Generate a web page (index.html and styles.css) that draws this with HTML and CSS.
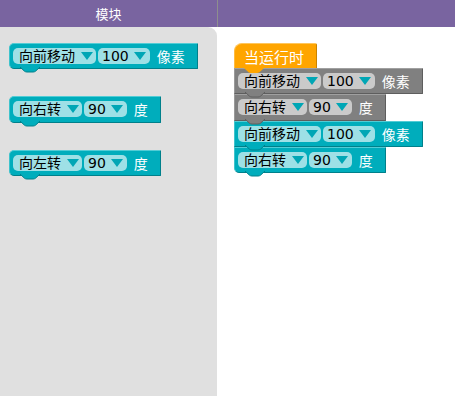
FILE: index.html
```html
<!DOCTYPE html>
<html lang="zh">
<head>
<meta charset="utf-8">
<title>模块</title>
<link rel="stylesheet" href="styles.css">
</head>
<body>
<div class="app">
  <div class="header">
    <div class="header-title">模块</div>
    <div class="header-rest"></div>
  </div>
  <div class="main">
    <div class="palette">
      <div class="block cyan">
        <span class="field">向前移动<i class="tri"></i></span>
        <span class="field num">100<i class="tri"></i></span>
        <span class="label">像素</span>
        <svg class="notch" viewBox="0 0 20 6" width="20" height="6"><path d="M0 0 L4.5 4.2 Q5.5 5 7 5 L13 5 Q14.5 5 15.5 4.2 L20 0"/></svg>
      </div>
      <div class="block cyan">
        <span class="field">向右转<i class="tri"></i></span>
        <span class="field num">90<i class="tri"></i></span>
        <span class="label">度</span>
        <svg class="notch" viewBox="0 0 20 6" width="20" height="6"><path d="M0 0 L4.5 4.2 Q5.5 5 7 5 L13 5 Q14.5 5 15.5 4.2 L20 0"/></svg>
      </div>
      <div class="block cyan">
        <span class="field">向左转<i class="tri"></i></span>
        <span class="field num">90<i class="tri"></i></span>
        <span class="label">度</span>
        <svg class="notch" viewBox="0 0 20 6" width="20" height="6"><path d="M0 0 L4.5 4.2 Q5.5 5 7 5 L13 5 Q14.5 5 15.5 4.2 L20 0"/></svg>
      </div>
    </div>
    <div class="workspace">
      <div class="stack">
        <div class="hat">当运行时
          <svg class="notch" viewBox="0 0 20 6" width="20" height="6"><path d="M0 0 L4.5 4.2 Q5.5 5 7 5 L13 5 Q14.5 5 15.5 4.2 L20 0"/></svg>
        </div>
        <div class="block gray s1">
          <span class="field">向前移动<i class="tri"></i></span>
          <span class="field num">100<i class="tri"></i></span>
          <span class="label">像素</span>
          <svg class="notch" viewBox="0 0 20 6" width="20" height="6"><path d="M0 0 L4.5 4.2 Q5.5 5 7 5 L13 5 Q14.5 5 15.5 4.2 L20 0"/></svg>
        </div>
        <div class="block gray s2">
          <span class="field">向右转<i class="tri"></i></span>
          <span class="field num">90<i class="tri"></i></span>
          <span class="label">度</span>
          <svg class="notch" viewBox="0 0 20 6" width="20" height="6"><path d="M0 0 L4.5 4.2 Q5.5 5 7 5 L13 5 Q14.5 5 15.5 4.2 L20 0"/></svg>
        </div>
        <div class="block cyan s3">
          <span class="field">向前移动<i class="tri"></i></span>
          <span class="field num">100<i class="tri"></i></span>
          <span class="label">像素</span>
          <svg class="notch" viewBox="0 0 20 6" width="20" height="6"><path d="M0 0 L4.5 4.2 Q5.5 5 7 5 L13 5 Q14.5 5 15.5 4.2 L20 0"/></svg>
        </div>
        <div class="block cyan s4">
          <span class="field">向右转<i class="tri"></i></span>
          <span class="field num">90<i class="tri"></i></span>
          <span class="label">度</span>
          <svg class="notch" viewBox="0 0 20 6" width="20" height="6"><path d="M0 0 L4.5 4.2 Q5.5 5 7 5 L13 5 Q14.5 5 15.5 4.2 L20 0"/></svg>
        </div>
      </div>
    </div>
  </div>
</div>
</body>
</html>
```
FILE: styles.css
```css
html, body {
  margin: 0;
  padding: 0;
  background: #ffffff;
}
body {
  font-family: "DejaVu Sans", "Noto Sans CJK SC", sans-serif;
}
.app {
  width: 455px;
  height: 396px;
  display: flex;
  flex-direction: column;
  overflow: hidden;
}
.header {
  height: 27px;
  flex-shrink: 0;
  display: flex;
  background: #7964a0;
}
.header-title {
  width: 218px;
  box-sizing: border-box;
  border-right: 1px solid #8e8e8e;
  color: #ffffff;
  font-size: 13px;
  display: flex;
  align-items: center;
  justify-content: center;
}
.header-rest {
  flex: 1;
}
.main {
  flex: 1;
  display: flex;
}
.palette {
  width: 217px;
  box-sizing: border-box;
  background: #e0e0e0;
  border-top-right-radius: 9px;
  padding: 16px 0 0 9px;
  display: flex;
  flex-direction: column;
  align-items: flex-start;
  gap: 27px;
}
.workspace {
  flex: 1;
  padding: 16px 0 0 17px;
}
.stack {
  display: flex;
  flex-direction: column;
  align-items: flex-start;
}
.block {
  position: relative;
  display: flex;
  align-items: center;
  height: 26.3px;
  box-sizing: border-box;
  padding: 0 12px 0 3px;
  border: 1px solid;
  border-radius: 5px 1px 1px 5px;
  font-size: 14px;
}
.stack .block {
  border-radius: 0 1px 1px 0;
}
.stack .s4 {
  border-radius: 0 1px 1px 5px;
}
.cyan {
  background: #00adbc;
  border-color: #52ccd5 #00808b #00808b #3fc3cc;
}
.cyan .notch path {
  fill: #00adbc;
  stroke: #00808b;
}
.gray {
  background: #808080;
  border-color: #a0a0a0 #5e5e5e #5e5e5e #9a9a9a;
}
.gray .notch path {
  fill: #808080;
  stroke: #5e5e5e;
}
.field {
  display: flex;
  align-items: center;
  height: 16px;
  line-height: 16px;
  padding: 0 3px 0 6px;
  background: #9ee0e6;
  border-radius: 5px;
  color: #000000;
  margin-right: 2px;
}
.field.num {
  padding-left: 4px;
  padding-right: 4px;
}
.gray .field {
  background: #cacaca;
}
.tri {
  width: 0;
  height: 0;
  border-left: 6px solid transparent;
  border-right: 6px solid transparent;
  border-top: 8px solid #00a6b5;
  margin-left: 6px;
}
.field.num .tri {
  margin-left: 5px;
}
.label {
  color: #ffffff;
  margin-left: 5px;
}
.notch {
  position: absolute;
  left: 10px;
  top: 100%;
  margin-top: -1px;
  overflow: visible;
  z-index: 2;
}
.notch path {
  stroke-width: 1;
}
.hat {
  position: relative;
  z-index: 6;
  height: 25px;
  box-sizing: border-box;
  display: flex;
  align-items: center;
  padding: 0 12px 0 9px;
  background: #ffa500;
  border-top: 1px solid #ffc65c;
  border-left: 1px solid #ffbb40;
  border-right: 1px solid #c98300;
  border-radius: 8px 2px 0 0;
  color: #ffffff;
  font-size: 15px;
}
.hat .notch path {
  fill: #ffa500;
  stroke: none;
}
.hat .notch {
  left: 9px;
  margin-top: 0;
}
.s1 { z-index: 5; }
.s2 { z-index: 4; }
.s3 { z-index: 3; }
.s4 { z-index: 2; }
```
